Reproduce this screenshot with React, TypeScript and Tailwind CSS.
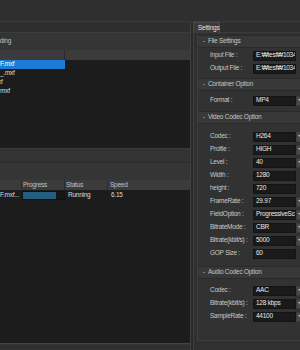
import React from "react";

type F = { label: string; value: string; dd?: boolean };

function Field({ label, value, dd }: F) {
  return (
    <div className="h-[13px] flex items-center">
      <div className="w-[55px] shrink-0 pl-[12px] text-[#c8c8c8] whitespace-nowrap">{label}</div>
      <div className="flex-1 min-w-0 h-[10px] bg-[#1a1a1a] border border-[#141414] flex items-center pl-[2px] text-[#e8e8e8] overflow-hidden whitespace-nowrap">
        {value}
      </div>
      {dd ? (
        <div className="w-[8px] shrink-0 h-[10px] bg-[#4a4a4a] border border-[#3a3a3a] flex items-start justify-center">
          <div className="mt-[2px] w-0 h-0 border-l-[2px] border-r-[2px] border-t-[2px] border-l-transparent border-r-transparent border-t-[#bdbdbd]" />
        </div>
      ) : (
        <div className="w-[8px] shrink-0" />
      )}
      <div className="w-[7px] shrink-0" />
    </div>
  );
}

function GroupHeader({ title }: { title: string }) {
  return (
    <div className="h-[13px] flex items-center bg-[#383838] border-y border-[#2a2a2a] pl-[5px] text-[#c4c4c4] whitespace-nowrap">
      <span className="mr-[3px]">-</span>
      {title}
    </div>
  );
}

export default function App() {
  return (
    <div className="w-[300px] h-[350px] overflow-hidden bg-[#2e2e2e] flex flex-col font-['Liberation_Sans',sans-serif] text-[6.5px] tracking-[-0.25px] leading-none">
      {/* top bar */}
      <div className="h-[22px] shrink-0 border-b border-[#3a3a3a] bg-[#2f2f2f]" />
      <div className="flex flex-1 min-h-0">
        {/* left column */}
        <div className="w-[191px] shrink-0 flex flex-col border-r border-[#404040]">
          {/* upper panel */}
          <div className="h-[11px] shrink-0 border-b border-[#3c3c3c] bg-[#2e2e2e]" />
          <div className="h-[17px] shrink-0 bg-[#353535] flex items-center overflow-hidden">
            <span className="ml-[-14px] text-[#c0c0c0] whitespace-nowrap">Encoding</span>
          </div>
          <div className="h-[10px] shrink-0 bg-[#3b3b3b] flex">
            <div className="w-[65px] border-r border-[#2b2b2b]" />
            <div className="flex-1" />
          </div>
          <div className="h-[88px] shrink-0 bg-[#1c1c1c] flex flex-col text-[#dcdcdc]">
            <div className="h-[9px] w-[65px] bg-[#1b7bd6] flex items-center text-white whitespace-nowrap">F.mxf</div>
            <div className="h-[9px] flex items-center whitespace-nowrap">_.mxf</div>
            <div className="h-[9px] flex items-center whitespace-nowrap">
              <span className="ml-[-2px]">xf</span>
            </div>
            <div className="h-[9px] flex items-center whitespace-nowrap">mxf</div>
          </div>
          {/* lower panel */}
          <div className="h-[15px] shrink-0 border-t border-[#3a3a3a] border-b border-b-[#2a2a2a] bg-[#333333]" />
          <div className="h-[17px] shrink-0 bg-[#353535]" />
          <div className="h-[10px] shrink-0 bg-[#3b3b3b] flex text-[#c0c0c0] whitespace-nowrap">
            <div className="w-[22px] border-r border-[#2b2b2b]" />
            <div className="w-[43px] border-r border-[#2b2b2b] flex items-center pl-[1px]">Progress</div>
            <div className="w-[43px] border-r border-[#2b2b2b] flex items-center pl-[1px]">Status</div>
            <div className="flex-1 flex items-center pl-[2px]">Speed</div>
          </div>
          <div className="flex-1 bg-[#1c1c1c] text-[#dcdcdc] whitespace-nowrap">
            <div className="h-[10px] flex items-center">
              <div className="w-[22px] overflow-hidden">F.mxf...</div>
              <div className="w-[43px] h-[9px] border border-[#111111] bg-[#161616] flex">
                <div className="w-[33px] bg-[#235e7e]" />
              </div>
              <div className="w-[43px] pl-[3px]">Running</div>
              <div className="flex-1 pl-[3px]">6.15</div>
            </div>
          </div>
          <div className="h-[3px] shrink-0 border-t border-[#444444] bg-[#333333]" />
          <div className="h-[4px] shrink-0 border-t border-[#2a2a2a] bg-[#303030]" />
        </div>
        <div className="w-[2px] shrink-0 bg-[#2a2a2a]" />
        {/* right column */}
        <div className="flex-1 min-w-0 overflow-hidden flex flex-col">
          <div className="h-[11px] shrink-0 flex w-[120px]">
            <div className="w-[27px] shrink-0 bg-[#3a3a3a] border-t border-x border-[#4a4a4a] flex items-center pl-[4px] text-[#e0e0e0] whitespace-nowrap">
              Settings
            </div>
            <div className="flex-1 border-b border-[#3c3c3c]" />
          </div>
          <div className="flex-1 w-[120px] shrink-0 bg-[#303030] border-l border-[#3e3e3e] pl-[3px] pt-[2px] flex flex-col">
            <div className="w-[114px] h-[306px] flex flex-col border-l border-[#3d3d3d] bg-[#323232]">
              <GroupHeader title="File Settings" />
              <div className="h-[1px]" />
              <Field label="Input File :" value="E:₩test₩103402_" />
              <Field label="Output File :" value="E:₩test₩103402_" />
              <div className="h-[3px]" />
              <GroupHeader title="Container Option" />
              <div className="h-[3px]" />
              <Field label="Format :" value="MP4" dd />
              <div className="h-[4px]" />
              <GroupHeader title="Video Codec Option" />
              <div className="h-[6px]" />
              <Field label="Codec :" value="H264" dd />
              <Field label="Profile :" value="HIGH" dd />
              <Field label="Level :" value="40" dd />
              <Field label="Width :" value="1280" />
              <Field label="height :" value="720" />
              <Field label="FrameRate :" value="29.97" dd />
              <Field label="FieldOption :" value="ProgressiveScan" dd />
              <Field label="BitrateMode :" value="CBR" dd />
              <Field label="Bitrate(kbit/s) :" value="5000" dd />
              <Field label="GOP Size :" value="60" />
              <div className="h-[6px]" />
              <GroupHeader title="Audio Codec Option" />
              <div className="h-[5px]" />
              <Field label="Codec :" value="AAC" dd />
              <Field label="Bitrate(kbit/s) :" value="128 kbps" dd />
              <Field label="SampleRate :" value="44100" dd />
              <div className="flex-1 border-b border-[#3d3d3d]" />
            </div>
            <div className="flex-1" />
          </div>
        </div>
      </div>
    </div>
  );
}
